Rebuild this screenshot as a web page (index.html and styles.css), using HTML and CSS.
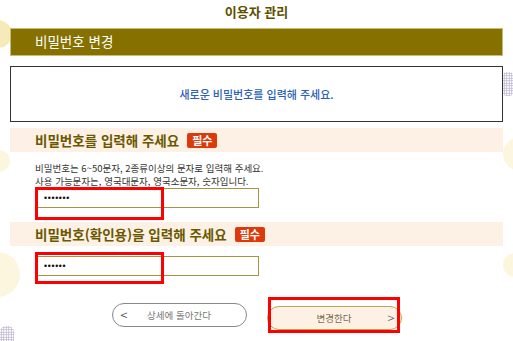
FILE: index.html
```html
<!DOCTYPE html>
<html lang="ko">
<head>
<meta charset="utf-8">
<link rel="stylesheet" href="styles.css">
</head>
<body>
<div class="deco deco-c1"></div>
<div class="deco deco-c2"></div>
<div class="deco deco-c3"></div>
<div class="deco deco-c4"></div>
<div class="deco deco-c5"></div>
<div class="deco deco-dots1"></div>
<div class="deco deco-dots2"></div>
<main class="page">
  <h1 class="page-title">이용자 관리</h1>
  <div class="bar">비밀번호 변경</div>
  <div class="notice">새로운 비밀번호를 입력해 주세요.</div>

  <div class="sec-head"><span class="sec-title">비밀번호를 입력해 주세요</span><span class="badge">필수</span></div>
  <div class="sec-body">
    <p class="desc">비밀번호는 6~50문자, 2종류이상의 문자로 입력해 주세요.<br>사용 가능문자는, 영국대문자, 영국소문자, 숫자입니다.</p>
    <div class="field">
      <div class="inp">•••••••</div>
      <span class="mark mark1"></span>
    </div>
  </div>

  <div class="sec-head sec-head2"><span class="sec-title">비밀번호(확인용)을 입력해 주세요</span><span class="badge">필수</span></div>
  <div class="sec-body sec-body2">
    <div class="field">
      <div class="inp">••••••</div>
      <span class="mark mark2"></span>
    </div>
  </div>

  <div class="actions">
    <button class="btn btn-back"><span class="arr arr-l">&lt;</span>상세에 돌아간다</button>
    <div class="btn-wrap">
      <button class="btn btn-go">변경한다<span class="arr arr-r">&gt;</span></button>
      <span class="mark mark3"></span>
    </div>
  </div>
</main>
</body>
</html>
```

FILE: styles.css
```css
* { box-sizing: border-box; }
html, body { margin: 0; padding: 0; background: #fff; }
body {
  width: 513px;
  height: 341px;
  overflow: hidden;
  position: relative;
  font-family: "Noto Sans CJK KR", "Noto Sans", sans-serif;
  color: #333;
}
.page {
  position: relative;
  padding: 0 10px;
}
.page-title {
  margin: 0;
  height: 28px;
  line-height: 24px;
  text-align: center;
  font-size: 13px;
  font-weight: 700;
  color: #5e4f00;
}
.bar {
  height: 28px;
  background: #857000;
  border: 1px solid #c9bb78;
  color: #fff;
  font-size: 13.5px;
  line-height: 25px;
  padding-left: 24px;
}
.notice {
  margin-top: 10px;
  height: 56px;
  border: 1px solid #333;
  display: flex;
  align-items: center;
  justify-content: center;
  color: #2b5fb8;
  font-size: 11px;
  font-weight: 500;
}
.sec-head {
  margin-top: 6px;
  height: 24px;
  background: #fdf1e5;
  display: flex;
  align-items: center;
  padding-left: 25px;
  gap: 8px;
}
.sec-head2 { margin-top: 14px; }
.sec-title {
  font-size: 13.5px;
  font-weight: 700;
  color: #6a5800;
}
.badge {
  background: #dd3a0c;
  color: #fff;
  font-size: 11px;
  font-weight: 700;
  height: 15px;
  line-height: 15px;
  padding: 0 5px;
  border-radius: 2px;
}
.sec-body { padding-left: 25px; }
.sec-body2 { padding-top: 10px; }
.desc {
  margin: 10px 0 0;
  font-size: 9.5px;
  line-height: 13px;
  color: #333;
}
.field {
  position: relative;
  width: 224px;
}
.inp {
  width: 224px;
  height: 20px;
  border: 1px solid #a39544;
  padding: 0 7px;
  font-size: 8.5px;
  font-family: "DejaVu Sans", sans-serif;
  line-height: 18px;
  letter-spacing: -1.3px;
  color: #111;
  background: #fff;
}
.mark {
  position: absolute;
  border: 3px solid #f00;
  pointer-events: none;
}
.mark1, .mark2 {
  left: 0;
  top: -1px;
  width: 129px;
  height: 33px;
}
.mark2 { top: -4px; height: 32px; }
.actions {
  margin-top: 27px;
  display: flex;
  justify-content: center;
  gap: 20px;
  padding-right: 5px;
}
.btn {
  position: relative;
  width: 135px;
  height: 24px;
  border-radius: 12px;
  font-family: inherit;
  font-size: 9.5px;
  color: #777;
  padding: 0;
  text-align: center;
  line-height: 22px;
}
.btn-back {
  background: #fff;
  border: 1px solid #888;
  margin-left: 5px;
}
.btn-go {
  background: #fdf1e5;
  border: 1px solid #b7a653;
  color: #7a6a50;
}
.btn-wrap { position: relative; }
.mark3 {
  left: 1px;
  top: -6px;
  width: 132px;
  height: 36px;
}
.arr {
  position: absolute;
  top: 0;
  font-size: 13px;
  line-height: 22px;
  color: #333;
  font-weight: 300;
}
.arr-l { left: 8px; }
.arr-r { right: 6px; color: #555; }

.deco { position: absolute; border-radius: 50%; background: #fdf6df; }
.deco-c1 { left: -16px; top: 20px; width: 28px; height: 28px; background: #f6ebb8; }
.deco-c2 { left: -12px; top: 150px; width: 22px; height: 22px; }
.deco-c3 { left: -25px; top: 252px; width: 45px; height: 45px; }
.deco-c4 { left: 503px; top: 137px; width: 34px; height: 34px; }
.deco-c5 { left: 503px; top: 253px; width: 24px; height: 24px; }
.deco-dots1, .deco-dots2 {
  background-color: transparent;
  background-image: radial-gradient(circle, #b8b0d0 0.8px, transparent 1px);
  background-size: 2.5px 2.5px;
}
.deco-dots1 { left: 503px; top: 72px; width: 10px; height: 24px; border-radius: 4px; }
.deco-dots2 { left: 0; top: 326px; width: 14px; height: 16px; border-radius: 40% 40% 0 0; }
```
